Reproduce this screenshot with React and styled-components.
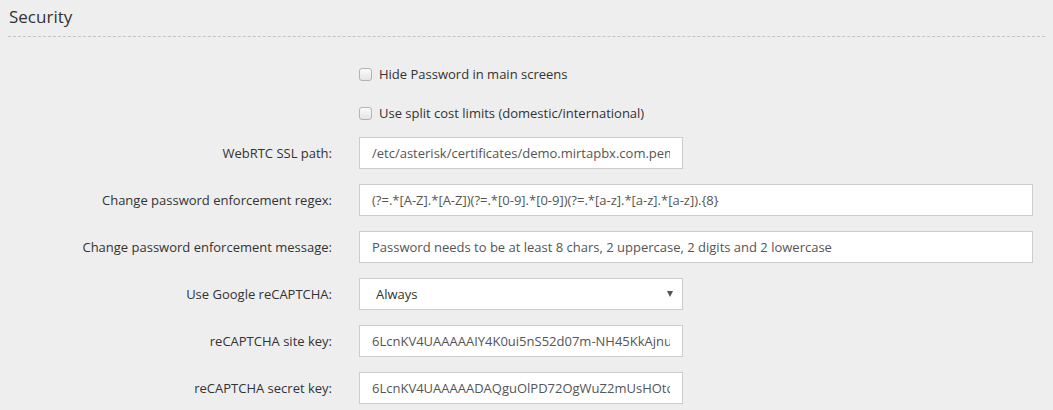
import React from "react";
import styled, { createGlobalStyle } from "styled-components";

const Global = createGlobalStyle`
  html, body {
    margin: 0;
    padding: 0;
    background: #eeeeee;
    font-family: "Open Sans", "Liberation Sans", sans-serif;
    color: #333;
  }
  * { box-sizing: border-box; }
`;

const Page = styled.div`
  padding: 5px 8px 0 8px;
`;

const Heading = styled.h2`
  margin: 0;
  font-size: 17px;
  font-weight: 400;
  line-height: 24px;
  color: #333;
  padding: 0 0 7px 1px;
  border-bottom: 1px dashed #c4c4c4;
`;

const Form = styled.div`
  margin-top: 22px;
  display: flex;
  flex-direction: column;
`;

const Row = styled.div`
  display: grid;
  grid-template-columns: 324px 674px;
  column-gap: 27px;
  align-items: center;
  height: ${(p) => (p.$check ? "30px" : "32px")};
  margin-bottom: ${(p) => (p.$check ? "9px" : "15px")};
`;

const Label = styled.label`
  text-align: right;
  font-size: 13px;
  color: #333;
  white-space: nowrap;
`;

const CheckLabel = styled.label`
  grid-column: 2;
  display: flex;
  align-items: center;
  gap: 7px;
  font-size: 13px;
  color: #333;
  cursor: pointer;
`;

const Box = styled.span`
  width: 13px;
  height: 13px;
  border: 1px solid #b3b3b3;
  border-radius: 3px;
  background: linear-gradient(#fbfbfb, #e4e4e4);
  flex: none;
`;

const Input = styled.input`
  width: ${(p) => (p.$wide ? "674px" : "324px")};
  height: 32px;
  border: 1px solid #cccccc;
  border-radius: 0;
  background: #fff;
  padding: 0 12px;
  font-family: "Open Sans", "Liberation Sans", sans-serif;
  font-size: 13px;
  color: #555;
  outline: none;
`;

const SelectWrap = styled.div`
  position: relative;
  width: 324px;
  height: 32px;
  &::after {
    content: "";
    position: absolute;
    right: 10px;
    top: 13px;
    width: 0;
    height: 0;
    border-left: 3.5px solid transparent;
    border-right: 3.5px solid transparent;
    border-top: 6px solid #555;
    pointer-events: none;
  }
`;

const Select = styled.select`
  appearance: none;
  -webkit-appearance: none;
  width: 100%;
  height: 32px;
  border: 1px solid #cccccc;
  border-radius: 0;
  background: #fff;
  padding: 0 16px;
  font-family: "Open Sans", "Liberation Sans", sans-serif;
  font-size: 13px;
  color: #333;
  outline: none;
`;

const fields = [
  { label: "WebRTC SSL path:", value: "/etc/asterisk/certificates/demo.mirtapbx.com.pem" },
  {
    label: "Change password enforcement regex:",
    value: "(?=.*[A-Z].*[A-Z])(?=.*[0-9].*[0-9])(?=.*[a-z].*[a-z].*[a-z]).{8}",
    wide: true,
  },
  {
    label: "Change password enforcement message:",
    value: "Password needs to be at least 8 chars, 2 uppercase, 2 digits and 2 lowercase",
    wide: true,
  },
];

const keys = [
  { label: "reCAPTCHA site key:", value: "6LcnKV4UAAAAAIY4K0ui5nS52d07m-NH45KkAjnu" },
  { label: "reCAPTCHA secret key:", value: "6LcnKV4UAAAAADAQguOlPD72OgWuZ2mUsHOtc" },
];

export default function App() {
  return (
    <Page>
      <Global />
      <Heading>Security</Heading>
      <Form>
        <Row $check>
          <CheckLabel>
            <Box />
            Hide Password in main screens
          </CheckLabel>
        </Row>
        <Row $check>
          <CheckLabel>
            <Box />
            Use split cost limits (domestic/international)
          </CheckLabel>
        </Row>
        {fields.map((f) => (
          <Row key={f.label}>
            <Label>{f.label}</Label>
            <Input $wide={f.wide} defaultValue={f.value} />
          </Row>
        ))}
        <Row>
          <Label>Use Google reCAPTCHA:</Label>
          <SelectWrap>
            <Select defaultValue="Always">
              <option>Always</option>
              <option>Never</option>
            </Select>
          </SelectWrap>
        </Row>
        {keys.map((f) => (
          <Row key={f.label}>
            <Label>{f.label}</Label>
            <Input defaultValue={f.value} />
          </Row>
        ))}
      </Form>
    </Page>
  );
}
